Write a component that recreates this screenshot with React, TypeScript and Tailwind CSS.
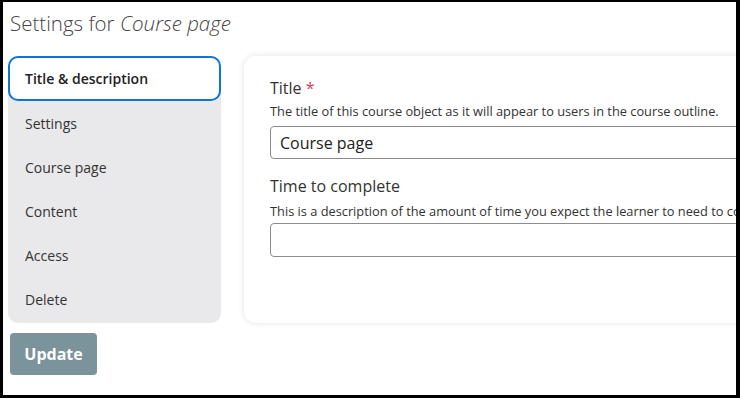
import React from 'react';

const tabs = ['Title & description', 'Settings', 'Course page', 'Content', 'Access', 'Delete'];

export default function App() {
  return (
    <div
      className="w-[740px] h-[398px] overflow-hidden bg-white border-black border-t-2 border-l-[3px] border-r-[4px] border-b-[3px] text-[#333]"
      style={{ fontFamily: '"Open Sans", "Noto Sans", sans-serif' }}
    >
      <div className="pl-[5px] pt-[7px]">
        <h1 className="text-[20.5px] leading-[28px] font-light text-[#444] pl-[2px]">
          Settings for <em className="italic">Course page</em>
        </h1>

        <div className="flex items-start gap-[23px] mt-[19px]">
          <div className="w-[213px] shrink-0">
            <nav className="bg-[#e9e9eb] rounded-[10px] flex flex-col pb-[1px]">
              {tabs.map((t, i) =>
                i === 0 ? (
                  <div
                    key={t}
                    className="h-[45px] flex items-center px-[15px] bg-white border-2 border-[#0f74d6] rounded-[10px] text-[14px] font-semibold text-[#222]"
                  >
                    {t}
                  </div>
                ) : (
                  <div key={t} className="h-[44.2px] flex items-center px-[17px] text-[14px] text-[#333]">
                    {t}
                  </div>
                )
              )}
            </nav>
            <button className="mt-[10px] ml-[2px] w-[87px] h-[42px] rounded-[4px] bg-[#7b939b] text-white text-[16px] font-bold">
              Update
            </button>
          </div>

          <div className="w-[640px] shrink-0 h-[267px] overflow-hidden bg-white rounded-[12px] shadow-[0_0_6px_rgba(0,0,0,0.12)] pl-[26px] pt-[21px]">
            <label className="block text-[16px] leading-[22px] text-[#333]">
              Title <span className="text-[#d63a5a]">*</span>
            </label>
            <p className="mt-[4px] text-[12.8px] leading-[16px] text-[#333] whitespace-nowrap">
              The title of this course object as it will appear to users in the course outline.
            </p>
            <div className="mt-[7px] h-[33px] border border-[#8c8c8c] rounded-[4px] flex items-center px-[9px] text-[16px] text-[#222]">
              Course page
            </div>

            <label className="block mt-[16px] text-[16px] leading-[22px] text-[#333]">Time to complete</label>
            <p className="mt-[6px] text-[12.8px] leading-[16px] text-[#333] whitespace-nowrap">
              This is a description of the amount of time you expect the learner to need to complete this object.
            </p>
            <div className="mt-[4px] h-[34px] border border-[#8c8c8c] rounded-[4px]" />
          </div>
        </div>
      </div>
    </div>
  );
}
